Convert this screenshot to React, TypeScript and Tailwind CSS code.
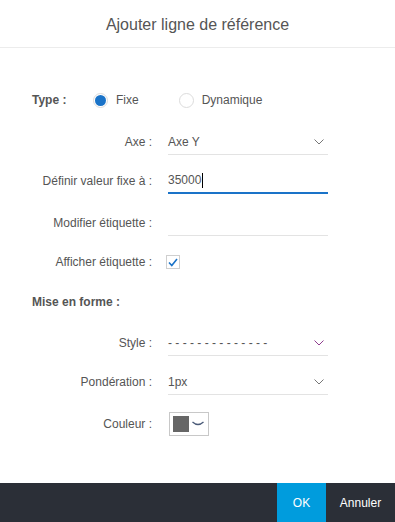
import React from "react";

const font = { fontFamily: '"Liberation Sans", Arial, sans-serif' };

const Chevron = ({ colour = "#777" }: { colour?: string }) => (
  <svg width="10" height="6" viewBox="0 0 10 6" className="shrink-0">
    <polyline points="0.5,0.5 5,5 9.5,0.5" fill="none" stroke={colour} strokeWidth="1" />
  </svg>
);

type RowProps = {
  label: string;
  children: React.ReactNode;
  className?: string;
};

const Row = ({ label, children, className = "" }: RowProps) => (
  <div className={`flex items-center h-[24px] ${className}`}>
    <div className="w-[152px] text-right text-[12px] text-[#555] whitespace-nowrap">{label}</div>
    <div className="ml-4 flex items-center h-full">{children}</div>
  </div>
);

const Field = ({
  value,
  chevron,
  chevronColour,
  active,
}: {
  value?: React.ReactNode;
  chevron?: boolean;
  chevronColour?: string;
  active?: boolean;
}) => (
  <div
    className={`w-[160px] h-[25px] flex items-center justify-between text-[12px] text-[#555] ${
      active ? "border-b-2 border-[#1a73c8]" : "border-b border-[#e3e3e3]"
    }`}
  >
    <span className="flex items-center">{value}</span>
    {chevron && (
      <span className="mr-[4px]">
        <Chevron colour={chevronColour} />
      </span>
    )}
  </div>
);

export default function App() {
  return (
    <div className="w-[395px] h-[522px] flex flex-col bg-white" style={font}>
      {/* Header */}
      <div className="h-[48px] flex items-center justify-center border-b border-[#ececec] pt-[3px]">
        <h1 className="text-[16px] text-[#555]">Ajouter ligne de référence</h1>
      </div>

      <div className="flex-1 pt-[40px]">
        {/* Type */}
        <div className="flex items-center h-[24px] pl-[32px] text-[12px] text-[#555]">
          <span className="font-bold w-[61px]">Type :</span>
          <label className="flex items-center gap-[8px]">
            <span className="w-[15px] h-[15px] rounded-full border border-[#dcdcdc] flex items-center justify-center">
              <span className="w-[11px] h-[11px] rounded-full bg-[#1a73c8]" />
            </span>
            Fixe
          </label>
          <label className="flex items-center gap-[8px] ml-[40px]">
            <span className="w-[15px] h-[15px] rounded-full border border-[#dcdcdc]" />
            Dynamique
          </label>
        </div>

        <Row label="Axe :" className="mt-[18px]">
          <Field value="Axe Y" chevron />
        </Row>

        <Row label="Définir valeur fixe à :" className="mt-[15px]">
          <Field
            active
            value={
              <>
                35000
                <span className="inline-block w-[1px] h-[15px] bg-black ml-[1px]" />
              </>
            }
          />
        </Row>

        <Row label="Modifier étiquette :" className="mt-[18px]">
          <Field />
        </Row>

        <Row label="Afficher étiquette :" className="mt-[15px]">
          <span className="w-[14px] h-[14px] border border-[#cfcfcf] flex items-center justify-center -ml-[2px]">
            <svg width="10" height="9" viewBox="0 0 10 9">
              <polyline points="1,4.5 3.8,7.5 9,1" fill="none" stroke="#1a73c8" strokeWidth="1.6" />
            </svg>
          </span>
        </Row>

        <div className="flex items-center h-[24px] pl-[32px] mt-[16px] text-[12px] text-[#555] font-bold">
          Mise en forme :
        </div>

        <Row label="Style :" className="mt-[17px]">
          <Field value="- - - - - - - - - - - - - -" chevron chevronColour="#8e3d8e" />
        </Row>

        <Row label="Pondération :" className="mt-[15px]">
          <Field value="1px" chevron />
        </Row>

        <Row label="Couleur :" className="mt-[18px]">
          <div className="w-[40px] h-[24px] border border-[#c8c8c8] flex items-center pl-[3px] gap-[3px] ml-[1px]">
            <span className="w-[16px] h-[16px] bg-[#666]" />
            <svg width="12" height="6" viewBox="0 0 12 6">
              <path d="M0.5 1 Q6 6 11.5 1" fill="none" stroke="#4a5a78" strokeWidth="1.3" />
            </svg>
          </div>
        </Row>
      </div>

      {/* Footer */}
      <div className="h-[39px] bg-[#2b2f37] flex justify-end text-[12px] text-white">
        <button className="w-[49px] h-full bg-[#009cdd]">OK</button>
        <button className="w-[69px] h-full">Annuler</button>
      </div>
    </div>
  );
}
